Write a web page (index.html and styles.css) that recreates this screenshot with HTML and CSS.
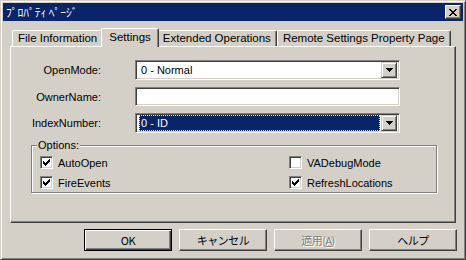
FILE: index.html
```html
<!DOCTYPE html>
<html lang="ja">
<head>
    <meta charset="UTF-8">
    <title>ﾌﾟﾛﾊﾟﾃｨ ﾍﾟｰｼﾞ</title>
    <link rel="stylesheet" href="styles.css">
</head>
<body>
    <div class="window">
        <div class="titlebar">
            <span class="title">ﾌﾟﾛﾊﾟﾃｨ ﾍﾟｰｼﾞ</span>
            <span class="close">
                <svg width="8" height="7" viewBox="0 0 8 7" shape-rendering="crispEdges"><path d="M0 0h2v1h-2zM6 0h2v1h-2zM1 1h2v1h-2zM5 1h2v1h-2zM2 2h4v1h-4zM3 3h2v1h-2zM2 4h4v1h-4zM1 5h2v1h-2zM5 5h2v1h-2zM0 6h2v1h-2zM6 6h2v1h-2z" fill="#000"/></svg>
            </span>
        </div>

        <div class="content">
            <div class="tabs">
                <div class="tab">File Information</div>
                <div class="tab active">Settings</div>
                <div class="tab">Extended Operations</div>
                <div class="tab">Remote Settings Property Page</div>
            </div>

            <div class="panel">
                <div class="form">
                    <label>OpenMode:</label>
                    <div class="combo">
                        <span class="value">0 - Normal</span>
                        <span class="drop"><svg width="7" height="4" viewBox="0 0 7 4" shape-rendering="crispEdges"><path d="M0 0h7v1h-1v1h-1v1h-1v1h-1v-1h-1v-1h-1v-1h-1z" fill="#000"/></svg></span>
                    </div>

                    <label>OwnerName:</label>
                    <div class="textbox"></div>

                    <label>IndexNumber:</label>
                    <div class="combo focused">
                        <span class="value">0 - ID</span>
                        <span class="drop"><svg width="7" height="4" viewBox="0 0 7 4" shape-rendering="crispEdges"><path d="M0 0h7v1h-1v1h-1v1h-1v1h-1v-1h-1v-1h-1v-1h-1z" fill="#000"/></svg></span>
                    </div>
                </div>

                <fieldset class="options">
                    <legend>Options:</legend>
                    <div class="checks">
                        <div class="check"><span class="box on"></span>AutoOpen</div>
                        <div class="check"><span class="box"></span>VADebugMode</div>
                        <div class="check"><span class="box on"></span>FireEvents</div>
                        <div class="check"><span class="box on"></span>RefreshLocations</div>
                    </div>
                </fieldset>
            </div>

            <div class="buttons">
                <span class="btn default">OK</span>
                <span class="btn">キャンセル</span>
                <span class="btn disabled">適用(<u>A</u>)</span>
                <span class="btn">ヘルプ</span>
            </div>
        </div>
    </div>
</body>
</html>
```

FILE: styles.css
```css
body { margin: 0; background: #d4d0c8; font-family: "Liberation Sans", "Noto Sans CJK JP", sans-serif; font-size: 11px; color: #000; }
.window { width: 466px; height: 260px; box-sizing: border-box; background: #d4d0c8; border: 1px solid; border-color: #d4d0c8 #404040 #404040 #d4d0c8; box-shadow: inset 1px 1px #fff, inset -1px -1px #808080; padding: 2px; display: flex; flex-direction: column; }

.titlebar { height: 18px; flex: none; background: #0a246a; color: #fff; display: flex; align-items: center; justify-content: space-between; padding: 0 2px 0 3px; }
.title { font-family: "Noto Sans CJK JP", sans-serif; font-size: 11.5px; line-height: 18px; }
.close { width: 16px; height: 14px; box-sizing: border-box; background: #d4d0c8; border: 1px solid; border-color: #fff #404040 #404040 #fff; box-shadow: inset -1px -1px #808080; display: flex; align-items: center; justify-content: center; }

.content { flex: 1; padding: 7px 7px 0 7px; display: flex; flex-direction: column; }

.tabs { display: flex; align-items: flex-end; height: 18px; padding-left: 2px; position: relative; z-index: 1; font-size: 11.5px; }
.tab { height: 16px; box-sizing: border-box; padding: 0 5px; line-height: 15px; border: 1px solid; border-bottom: none; border-color: #fff #404040 #fff #fff; box-shadow: inset -1px 0 #808080; border-radius: 2px 2px 0 0; background: #d4d0c8; white-space: nowrap; }
.tab.active { height: 19px; margin: 0 -2px -1px; padding: 0 7px; line-height: 16px; position: relative; z-index: 2; }

.panel { height: 177px; flex: none; box-sizing: border-box; border: 1px solid; border-color: #fff #404040 #404040 #fff; box-shadow: inset -1px -1px #808080; padding-top: 13px; }

.form { display: grid; grid-template-columns: 90px 265px; column-gap: 34px; row-gap: 7px; align-items: center; }
.form label { text-align: right; }
.combo, .textbox { height: 20px; box-sizing: border-box; background: #fff; border: 1px solid; border-color: #808080 #fff #fff #808080; box-shadow: inset 1px 1px #404040, inset -1px -1px #d4d0c8; display: flex; align-items: center; padding: 2px; }
.textbox { height: 19px; }
.combo .value { flex: 1; padding-left: 3px; line-height: 14px; }
.combo.focused .value { margin: 0 1px 0 1px; padding-left: 2px; height: 16px; line-height: 16px; box-sizing: border-box; background: #0a246a; color: #fff; outline: 1px dotted #f8e890; outline-offset: -1px; }
.drop { width: 16px; height: 16px; box-sizing: border-box; background: #d4d0c8; border: 1px solid; border-color: #d4d0c8 #404040 #404040 #d4d0c8; box-shadow: inset 1px 1px #fff, inset -1px -1px #808080; display: flex; align-items: center; justify-content: center; }

.options { margin: 5px 18px 0 20px; padding: 4px 5px 3px 5px; border: 1px solid #808080; box-shadow: inset 1px 1px #fff, 1px 1px #fff; min-width: 0; }
.options legend { padding: 0 1px; background: #d4d0c8; line-height: 14px; }
.checks { display: grid; grid-template-columns: 249px 1fr; row-gap: 7px; padding-left: 3px; }
.check { display: flex; align-items: center; gap: 5px; height: 13px; }
.box { width: 13px; height: 13px; box-sizing: border-box; background: #fff; border: 1px solid; border-color: #808080 #fff #fff #808080; box-shadow: inset 1px 1px #404040, inset -1px -1px #d4d0c8; }
.box.on { background: #fff url("data:image/svg+xml,%3Csvg xmlns='http://www.w3.org/2000/svg' width='7' height='7' shape-rendering='crispEdges'%3E%3Cpath d='M6 0h1v3h-1v1h-1v1h-1v1h-1v1h-1v-1h-1v-1h-1v-3h1v1h1v1h1v-1h1v-1h1v-1h1z'/%3E%3C/svg%3E") no-repeat 2px 2px; }

.buttons { display: flex; justify-content: flex-end; gap: 7px; margin: 6px -1px 0 0; }
.btn { width: 88px; height: 22px; box-sizing: border-box; display: flex; align-items: center; justify-content: center; font-family: "Noto Sans CJK JP", sans-serif; letter-spacing: -0.5px; border: 1px solid; border-color: #fff #404040 #404040 #fff; box-shadow: inset -1px -1px #808080; }
.btn.default { border-color: #000; box-shadow: inset 1px 1px #fff, inset -1px -1px #404040, inset -2px -2px #808080; }
.btn.disabled { color: #808080; text-shadow: 1px 1px #fff; }
```
